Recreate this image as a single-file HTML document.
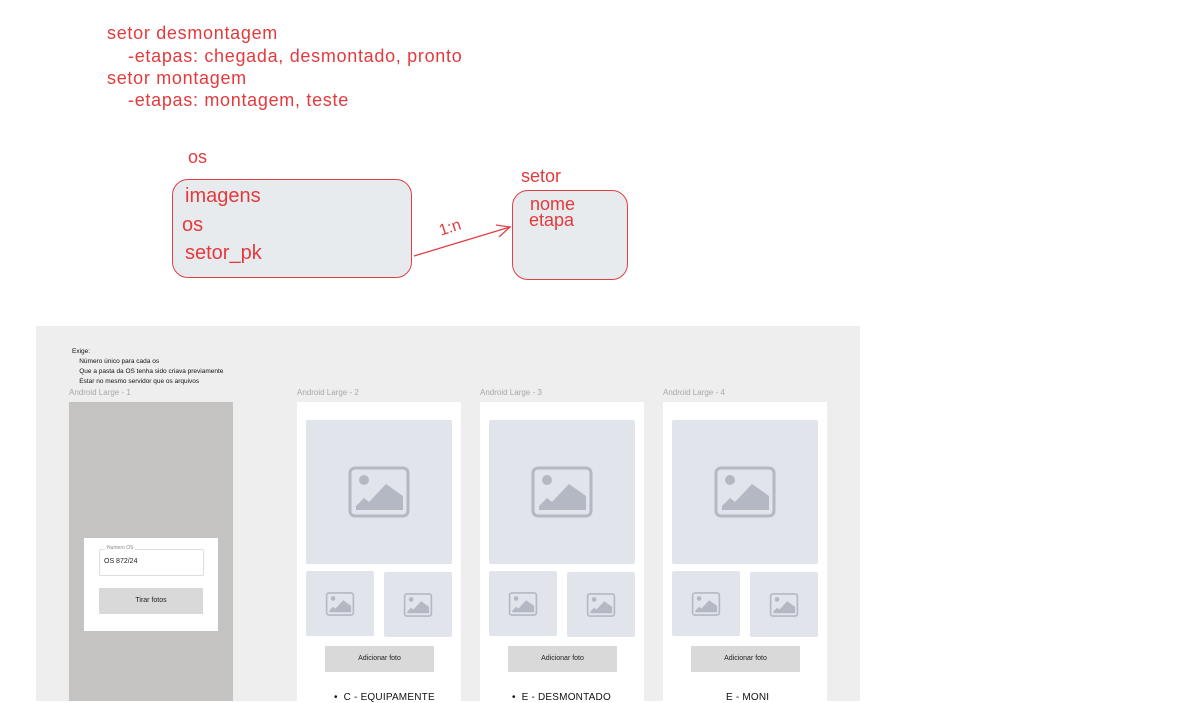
<!DOCTYPE html>
<html><head><meta charset="utf-8"><style>
body{margin:0;width:1199px;height:701px;background:#fff;position:relative;overflow:hidden;font-family:"Liberation Sans",sans-serif}
.a{position:absolute;white-space:nowrap}
.r{color:#e33a3e}
.t18{font-size:18px;line-height:18px}
.t20{font-size:20px;line-height:20px}
.sp{letter-spacing:0.7px}
.box{position:absolute;background:#e8ebee;border:1.3px solid #e04045;border-radius:16px}
.canvas{position:absolute;left:36px;top:326px;width:824px;height:375px;background:#eeeeee}
.lbl{position:absolute;font-size:8px;color:#a8a8a8}
.fr{position:absolute;background:#fff;top:402px;width:164px;height:299px}
.ph{position:absolute;background:#e1e4ea;border-radius:2px}
.ph svg{position:absolute;left:50%;top:50%;transform:translate(-50%,-50%)}
.btn{position:absolute;background:#d9d9d9;font-size:7px;color:#222;text-align:center}
.bt{position:absolute;font-size:10px;color:#111;letter-spacing:.2px}
</style></head><body>
<div class="a r t18 sp" style="left:107px;top:24px">setor desmontagem</div>
<div class="a r t18 sp" style="left:128px;top:47px">-etapas: chegada, desmontado, pronto</div>
<div class="a r t18 sp" style="left:107px;top:69px">setor montagem</div>
<div class="a r t18 sp" style="left:128px;top:91px">-etapas: montagem, teste</div>

<div class="a r t18" style="left:188px;top:148px">os</div>
<div class="box" style="left:172px;top:179px;width:238px;height:97px"></div>
<div class="a r t20" style="left:185px;top:186px">imagens</div>
<div class="a r t20" style="left:182px;top:215px">os</div>
<div class="a r t20" style="left:185px;top:243px">setor_pk</div>

<svg class="a" style="left:0;top:0" width="1199" height="300">
<path d="M414 256 L510 227" stroke="#e04045" stroke-width="1.3" fill="none"/>
<path d="M496 225 L510 227 L499 237" stroke="#e04045" stroke-width="1.3" fill="none"/>
<text x="438" y="233" fill="#e33a3e" font-size="16" font-family="Liberation Sans" transform="rotate(-18 448 225)">1:n</text>
</svg>

<div class="a r t18" style="left:521px;top:167px">setor</div>
<div class="box" style="left:512px;top:190px;width:114px;height:88px"></div>
<div class="a r t18" style="left:530px;top:195px">nome</div>
<div class="a r t18" style="left:529px;top:211px">etapa</div>

<div class="canvas"></div>
<div class="a" style="left:72px;top:347px;font-size:6.5px;line-height:10px;color:#111">Exige:<br>&nbsp;&nbsp;&nbsp;&nbsp;Número único para cada os<br>&nbsp;&nbsp;&nbsp;&nbsp;Que a pasta da OS tenha sido criava previamente<br>&nbsp;&nbsp;&nbsp;&nbsp;Estar no mesmo servidor que os arquivos</div>

<div class="lbl" style="left:69px;top:388px">Android Large - 1</div>
<div class="a" style="left:69px;top:402px;width:164px;height:299px;background:#c4c3c2"></div>
<div class="a" style="left:84px;top:538px;width:134px;height:93px;background:#fff"></div>
<div class="a" style="left:99px;top:549px;width:103px;height:25px;border:1px solid #ddd;border-radius:2px;background:#fff"></div>
<div class="a" style="left:105px;top:545px;font-size:5px;color:#888;background:#fff;padding:0 2px">Numero OS</div>
<div class="a" style="left:104px;top:558px;font-size:7px;color:#222">OS 872/24</div>
<div class="btn" style="left:99px;top:588px;width:104px;height:26px;line-height:26px">Tirar fotos</div>

<div id="f"></div>
<script>
var xs=[297,480,663],labels=["Android Large - 2","Android Large - 3","Android Large - 4"],bt=["•&nbsp; C - EQUIPAMENTE","•&nbsp; E - DESMONTADO","E - MONI"],bx=[334,512,726];
var big='<svg width="62" height="52" viewBox="0 0 62 52"><rect x="2" y="2" width="58" height="48" rx="5" fill="none" stroke="#b3b8c2" stroke-width="3"/><circle cx="16" cy="14" r="5" fill="#b3b8c2"/><path d="M8 44 L8 40 L16 32 L21 36 L38 18 L55 30 L55 44Z" fill="#b3b8c2"/></svg>';
var sm='<svg width="30" height="24" viewBox="0 0 62 52"><rect x="2" y="2" width="58" height="48" rx="5" fill="none" stroke="#b3b8c2" stroke-width="3.5"/><circle cx="16" cy="14" r="5" fill="#b3b8c2"/><path d="M8 44 L8 40 L16 32 L21 36 L38 18 L55 30 L55 44Z" fill="#b3b8c2"/></svg>';
var h='';
for(var i=0;i<3;i++){var x=xs[i];
h+='<div class="lbl" style="left:'+x+'px;top:388px">'+labels[i]+'</div>';
h+='<div class="fr" style="left:'+x+'px"></div>';
h+='<div class="ph" style="left:'+(x+9)+'px;top:420px;width:146px;height:144px">'+big+'</div>';
h+='<div class="ph" style="left:'+(x+9)+'px;top:571px;width:68px;height:65px">'+sm+'</div>';
h+='<div class="ph" style="left:'+(x+87)+'px;top:572px;width:68px;height:65px">'+sm+'</div>';
h+='<div class="btn" style="left:'+(x+28)+'px;top:646px;width:109px;height:26px;line-height:26px">Adicionar foto</div>';
h+='<div class="bt" style="left:'+bx[i]+'px;top:692px">'+bt[i]+'</div>';}
document.getElementById('f').innerHTML=h;
</script>
</body></html>
